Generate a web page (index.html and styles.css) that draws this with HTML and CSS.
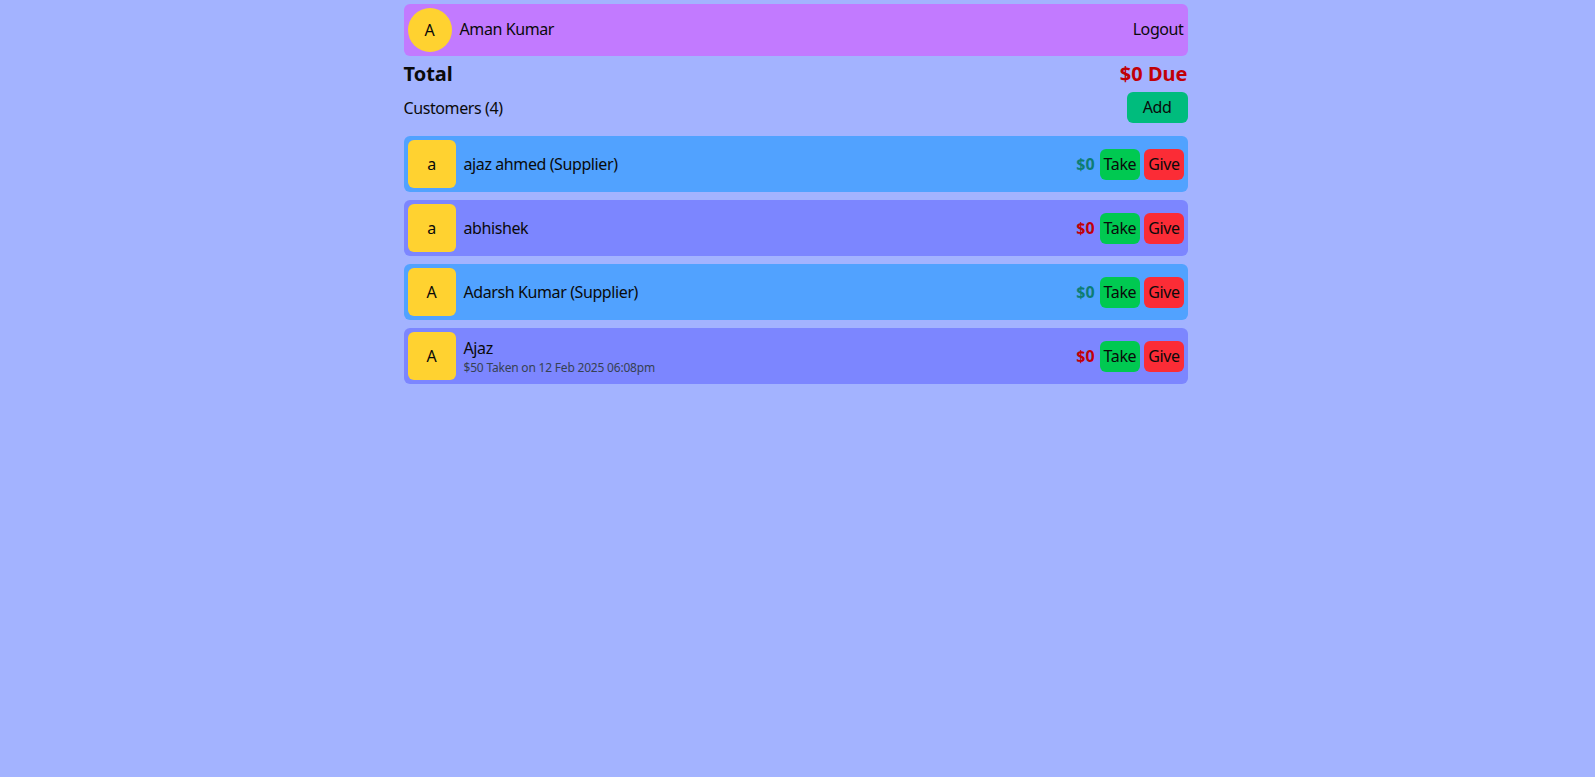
FILE: index.html
```html
<!DOCTYPE html>
<html lang="en">
<head>
<meta charset="utf-8">
<title>Customers</title>
<link rel="stylesheet" href="styles.css">
</head>
<body>
<div class="app">
  <header class="topbar">
    <div class="user">
      <div class="user-avatar">A</div>
      <span class="user-name">Aman Kumar</span>
    </div>
    <button class="logout">Logout</button>
  </header>

  <div class="total-row">
    <span class="total-label">Total</span>
    <span class="total-due">$0 Due</span>
  </div>

  <div class="customers-row">
    <span class="customers-label">Customers (4)</span>
    <button class="add-btn">Add</button>
  </div>

  <ul class="list">
    <li class="item item-blue">
      <div class="item-avatar">a</div>
      <div class="item-info">
        <div class="item-name">ajaz ahmed (Supplier)</div>
      </div>
      <div class="item-actions">
        <span class="amount amount-green">$0</span>
        <button class="btn btn-take">Take</button>
        <button class="btn btn-give">Give</button>
      </div>
    </li>
    <li class="item item-indigo">
      <div class="item-avatar">a</div>
      <div class="item-info">
        <div class="item-name">abhishek</div>
      </div>
      <div class="item-actions">
        <span class="amount amount-red">$0</span>
        <button class="btn btn-take">Take</button>
        <button class="btn btn-give">Give</button>
      </div>
    </li>
    <li class="item item-blue">
      <div class="item-avatar">A</div>
      <div class="item-info">
        <div class="item-name">Adarsh Kumar (Supplier)</div>
      </div>
      <div class="item-actions">
        <span class="amount amount-green">$0</span>
        <button class="btn btn-take">Take</button>
        <button class="btn btn-give">Give</button>
      </div>
    </li>
    <li class="item item-indigo">
      <div class="item-avatar">A</div>
      <div class="item-info">
        <div class="item-name">Ajaz</div>
        <div class="item-sub">$50 Taken on 12 Feb 2025 06:08pm</div>
      </div>
      <div class="item-actions">
        <span class="amount amount-red">$0</span>
        <button class="btn btn-take">Take</button>
        <button class="btn btn-give">Give</button>
      </div>
    </li>
  </ul>
</div>
</body>
</html>
```

FILE: styles.css
```css
* { box-sizing: border-box; }
html, body {
  margin: 0;
  padding: 0;
  background: #a3b3ff;
  min-height: 100vh;
}
body {
  font-family: "Noto Sans", "DejaVu Sans", sans-serif;
  font-size: 16px;
  line-height: 24px;
  letter-spacing: -0.4px;
  color: #0a0a0a;
}
button {
  font-family: inherit;
  font-size: 16px;
  line-height: 23px;
  letter-spacing: -0.4px;
  color: #0a0a0a;
  border: none;
  cursor: pointer;
}
.app {
  width: 784px;
  margin: 0 auto;
  padding-top: 4px;
  position: relative;
  left: -2px;
}
.topbar {
  display: flex;
  align-items: center;
  justify-content: space-between;
  background: #c27aff;
  border-radius: 6px;
  padding: 4px;
  height: 52px;
}
.user {
  display: flex;
  align-items: center;
  gap: 8px;
}
.user-name { position: relative; top: -1px; }
.user-avatar {
  width: 44px;
  height: 44px;
  border-radius: 50%;
  background: #ffd230;
  display: flex;
  align-items: center;
  justify-content: center;
}
.logout {
  background: transparent;
  padding: 0;
  position: relative;
  top: -1px;
}
.total-row {
  display: flex;
  justify-content: space-between;
  align-items: center;
  margin-top: 4px;
  height: 28px;
  font-size: 20px;
  line-height: 28px;
  font-weight: 700;
  letter-spacing: 0;
}
.total-due { color: #c10007; }
.customers-row {
  display: flex;
  justify-content: space-between;
  align-items: center;
  margin-top: 4px;
}
.add-btn {
  background: #00bc7d;
  border-radius: 6px;
  padding: 4px 0;
  width: 61px;
  height: 31px;
}
.list {
  list-style: none;
  margin: 13px 0 0;
  padding: 0;
  display: flex;
  flex-direction: column;
  gap: 8px;
}
.item {
  display: flex;
  align-items: center;
  gap: 8px;
  padding: 4px;
  border-radius: 6px;
  height: 56px;
}
.item-blue { background: #51a2ff; }
.item-indigo { background: #7c86ff; }
.item-avatar {
  width: 48px;
  height: 48px;
  flex: none;
  border-radius: 6px;
  background: #ffd230;
  display: flex;
  align-items: center;
  justify-content: center;
}
.item-info {
  flex: 1;
  display: flex;
  flex-direction: column;
}
.item-sub {
  font-size: 12px;
  line-height: 16px;
  letter-spacing: -0.2px;
  color: #364153;
}
.item-actions {
  display: flex;
  align-items: center;
  gap: 4px;
}
.amount {
  font-weight: 700;
  margin-right: 1px;
  letter-spacing: 0;
}
.amount-green { color: #0d7d74; }
.amount-red { color: #c10007; }
.btn {
  height: 31px;
  border-radius: 6px;
  padding: 4px;
}
.btn-take { background: #00c951; }
.btn-give { background: #fb2c36; }
```
